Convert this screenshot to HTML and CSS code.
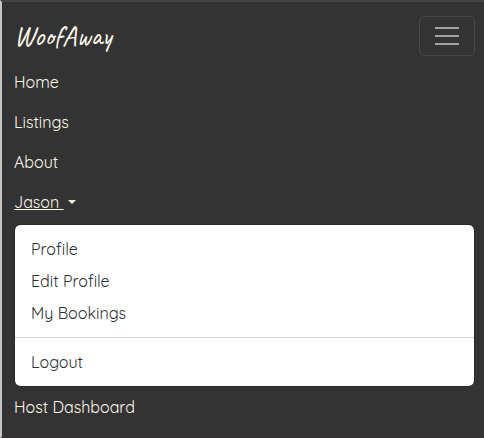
FILE: index.html
```html
<!DOCTYPE html>
<html lang="en">
<head>
<meta charset="utf-8">
<title>WoofAway</title>
<link rel="stylesheet" href="styles.css">
</head>
<body>
<nav class="navbar">
  <header class="navbar-top">
    <a class="brand">WoofAway</a>
    <button class="toggler" aria-label="Toggle navigation">
      <svg width="30" height="30" viewBox="0 0 30 30"><path d="M3 7h24M3 15h24M3 23h24" stroke="#a3a3a3" stroke-width="2"/></svg>
    </button>
  </header>
  <ul class="nav-list">
    <li class="nav-link">Home</li>
    <li class="nav-link">Listings</li>
    <li class="nav-link">About</li>
    <li class="nav-link"><span class="user-name">Jason </span><span class="caret"></span></li>
  </ul>
  <ul class="dropdown">
    <li class="item">Profile</li>
    <li class="item">Edit Profile</li>
    <li class="item">My Bookings</li>
    <li class="divider"></li>
    <li class="item">Logout</li>
  </ul>
  <div class="nav-link">Host Dashboard</div>
</nav>
</body>
</html>
```
FILE: styles.css
```css
* { box-sizing: border-box; }
body { margin: 0; background: #333; font: 400 16px/24px Quicksand, Lato, sans-serif; }
ul { list-style: none; margin: 0; padding: 0; }
.navbar {
  height: 438px;
  padding: 8px 9px 0 12px;
  background: #333;
  border-left: 2px solid #c4c4c4;
  border-top: 2px solid #444;
  border-bottom: 1px solid #373135;
}
.navbar-top { display: flex; justify-content: space-between; height: 52px; padding-top: 6px; }
.brand {
  font: 400 28px/40px Caveat, cursive;
  color: #fff8eb;
}
.toggler {
  display: flex; align-items: center; justify-content: center;
  width: 56px; height: 40px; padding: 0;
  border: 1px solid #484848; border-radius: 6px; background: none;
}
.nav-link { height: 40px; padding: 8px 0; color: #fff8eb; white-space: pre; }
.user-name { display: inline-block; height: 24px; text-decoration: underline; }
.caret {
  display: inline-block; margin-left: 4px; vertical-align: 4px;
  border: 4px solid transparent; border-top-color: #fff8eb; border-bottom: 0;
}
.dropdown {
  height: 163px; padding: 8px 0;
  border: 1px solid #292929; border-radius: 6px;
  background: #fff; background-clip: padding-box;
  margin-top: 2px;
}
.item { height: 32px; padding: 4px 16px; color: #2c3034; white-space: nowrap; }
.divider { height: 1px; margin: 8px 0; background: #d3d3d3; }
```
